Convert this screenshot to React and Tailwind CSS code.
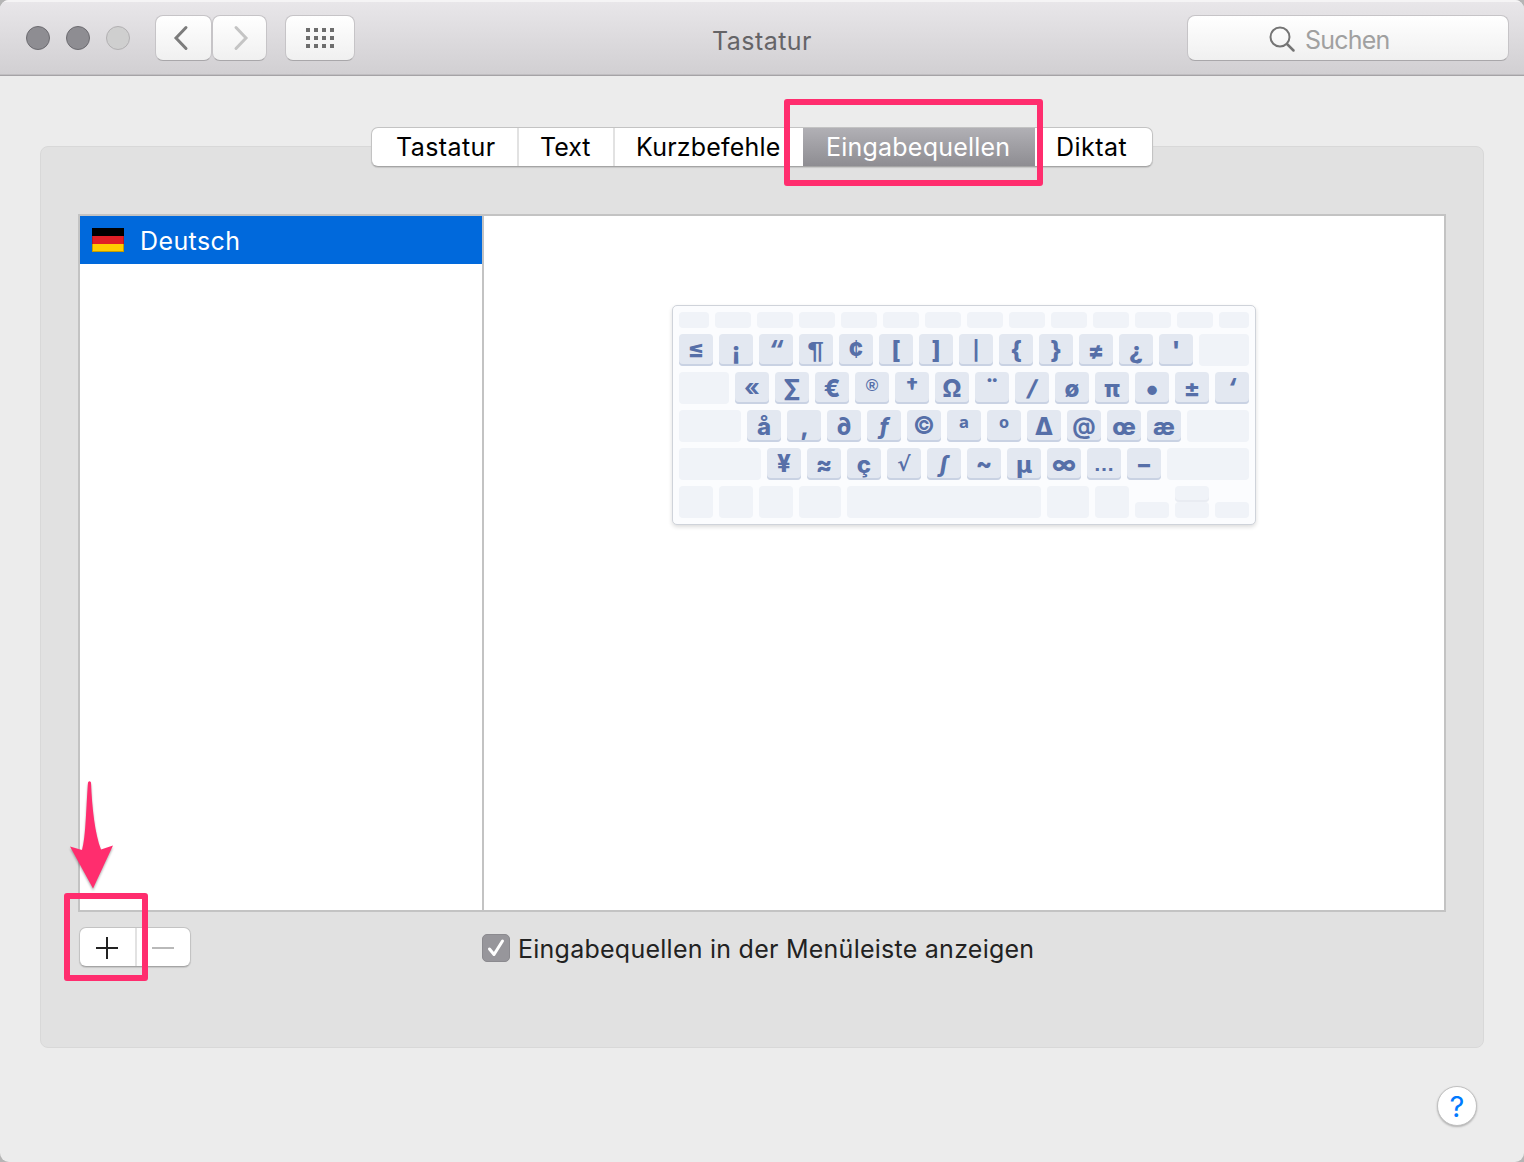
import React from "react";

const glyphRows = [
  { keys: ["≤", "¡", "“", "¶", "¢", "[", "]", "|", "{", "}", "≠", "¿", "'"], after: "w-[50px]" },
  { before: "w-[50px]", keys: ["«", "∑", "€", "®", "†", "Ω", "¨", "/", "ø", "π", "•", "±", "‘"] },
  { before: "w-[62px]", keys: ["å", "‚", "∂", "ƒ", "©", "ª", "º", "∆", "@", "œ", "æ"], after: "w-[62px]" },
  { before: "w-[82px]", keys: ["¥", "≈", "ç", "√", "∫", "~", "µ", "∞", "…", "–"], after: "w-[82px]" },
];

// Size, slant and offset of each glyph that departs from the standard key label.
const glyphClass = {
  "≤": "text-[24px] font-extrabold",
  "“": "text-[24px] font-extrabold italic",
  "¶": "text-[24px] font-bold font-['Liberation_Sans',sans-serif] scale-x-125 translate-y-px",
  "¢": "text-[24px] font-extrabold",
  "|": "text-[19px] font-bold translate-y-px",
  "®": "text-[17px] font-bold font-['Liberation_Sans',sans-serif] -translate-y-0.5",
  "†": "text-[22px] font-extrabold -translate-y-0.5",
  "/": "text-[22px] font-extrabold -skew-x-12",
  "ƒ": "text-[23px] font-extrabold italic",
  "©": "text-[24px] font-bold",
  "ª": "text-[26px] font-bold font-['Open_Sans',sans-serif] translate-y-0.5",
  "º": "text-[26px] font-bold font-['Open_Sans',sans-serif] translate-y-0.5",
  "@": "text-[23px] font-bold",
  "√": "text-[20px] font-bold font-['DejaVu_Sans',sans-serif]",
  "∫": "text-[22px] font-extrabold italic",
  "~": "text-[24px] font-extrabold",
  "•": "text-[30px] font-extrabold",
  "…": "text-[21px] font-bold font-['Liberation_Sans',sans-serif]",
  "‘": "text-[24px] font-extrabold italic",
  "«": "text-[24px] font-bold",
  "¥": "text-[24px] font-extrabold",
};

function Blank({ size }) {
  return <div className={`rounded-[4px] bg-[#f0f3f8] ${size}`} />;
}

function Key({ glyph }) {
  return (
    <div className="flex h-8 w-[34px] items-center justify-center rounded-[4px] bg-[#e3e8f1] shadow-[inset_0_-2px_0_#c9d2e3]">
      <span className={`block whitespace-pre leading-8 text-[#566fa8] ${glyphClass[glyph] || "text-[24px] font-extrabold translate-y-px"}`}>
        {glyph}
      </span>
    </div>
  );
}

function Keyboard() {
  return (
    <div className="flex h-[220px] w-[584px] flex-col gap-1.5 rounded-[5px] border border-[#cfd3da] bg-[#fbfcfe] p-1.5 shadow-[0_2px_4px_rgba(0,0,0,0.14)]">
      <div className="flex gap-1.5">
        {Array.from({ length: 14 }, (_, i) => (
          <Blank key={i} size={i === 0 || i === 13 ? "h-4 w-[30px]" : "h-4 w-9"} />
        ))}
      </div>
      {glyphRows.map((row, i) => (
        <div key={i} className="flex h-8 gap-1.5">
          {row.before && <Blank size={`h-8 ${row.before}`} />}
          {row.keys.map((g) => (
            <Key key={g} glyph={g} />
          ))}
          {row.after && <Blank size={`h-8 ${row.after}`} />}
        </div>
      ))}
      <div className="flex h-8 items-end gap-1.5">
        <Blank size="h-8 w-[34px]" />
        <Blank size="h-8 w-[34px]" />
        <Blank size="h-8 w-[34px]" />
        <Blank size="h-8 w-[42px]" />
        <Blank size="h-8 w-[194px]" />
        <Blank size="h-8 w-[42px]" />
        <Blank size="h-8 w-[34px]" />
        <Blank size="h-4 w-[34px]" />
        <div className="flex flex-col">
          <Blank size="h-4 w-[34px] shadow-[inset_0_-2px_0_#e9ecf2]" />
          <Blank size="h-4 w-[34px]" />
        </div>
        <Blank size="h-4 w-[34px]" />
      </div>
    </div>
  );
}

const toolButton =
  "flex h-[46px] items-center justify-center rounded-[8px] border border-[#c6c4c7] border-b-[#a9a7aa] bg-linear-to-b from-white to-[#f0f0f0]";

function TitleBar() {
  return (
    <header className="flex h-[76px] items-start border-b border-[#a5a3a6] bg-linear-to-b from-[#e9e7ea] to-[#d1cfd2] shadow-[inset_0_2px_0_#f5f4f5,inset_0_-1px_0_#c0bec1]">
      <div className="mt-[26px] ml-[26px] flex gap-4">
        <span className="size-6 rounded-full border border-[#6c6b70] bg-[#8e8d92]" />
        <span className="size-6 rounded-full border border-[#6c6b70] bg-[#8e8d92]" />
        <span className="size-6 rounded-full border border-[#b2b0b2] bg-[#cfcfcf]" />
      </div>
      <div className="mt-[15px] ml-[25px] flex">
        <button className={`${toolButton} w-[57px]`}>
          <svg width="16" height="26" viewBox="0 0 16 26" fill="none" stroke="#7c7c7c" strokeWidth="3" strokeLinecap="round" className="-ml-1.5">
            <path d="M13 2.500L3 13L13 23.500" />
          </svg>
        </button>
        <button className={`${toolButton} w-[55px]`}>
          <svg width="16" height="26" viewBox="0 0 16 26" fill="none" stroke="#c4c4c4" strokeWidth="3" strokeLinecap="round" className="ml-0.5">
            <path d="M3 2.500L13 13L3 23.500" />
          </svg>
        </button>
      </div>
      <button className={`${toolButton} mt-[15px] ml-[18px] w-[70px]`}>
        <span className="grid grid-cols-4 gap-1">
          {Array.from({ length: 12 }, (_, i) => (
            <span key={i} className="size-1 bg-[#6d6d6d]" />
          ))}
        </span>
      </button>
      <h1 className="mt-[23px] ml-[357px] w-[475px] text-[25px] leading-9 tracking-[0.45px] text-[#656467]">Tastatur</h1>
      <div className={`${toolButton} mt-[15px] w-[322px] justify-start! pl-[81px]`}>
        <svg width="28" height="28" viewBox="0 0 28 28" fill="none" stroke="#747474" strokeWidth="2" strokeLinecap="round" className="mt-0.5">
          <circle cx="11" cy="12" r="9.500" />
          <path d="M18 19L24.500 25.500" strokeWidth="2.500" />
        </svg>
        <span className="ml-2 pt-[3px] text-[25px] leading-8 tracking-[-0.8px] text-[#a0a0a0]">Suchen</span>
      </div>
    </header>
  );
}

function Tabs() {
  const tab = "h-full border-[#e2e2e2] text-[25px] leading-[39px] whitespace-nowrap";
  return (
    <nav className="flex h-10 w-[782px] overflow-hidden rounded-[7px] border border-[#c3c3c3] border-b-[#a5a5a5] bg-white text-black shadow-[0_1px_1px_rgba(0,0,0,0.12)]">
      <div className={`${tab} w-[147px] border-r-2 pl-6 tracking-[0.4px]`}>Tastatur</div>
      <div className={`${tab} w-24 border-r-2 pl-[21px]`}>Text</div>
      <div className={`${tab} w-[188px] pl-[21px] tracking-[0.2px]`}>Kurzbefehle</div>
      <div className={`${tab} w-[232px] bg-linear-to-b from-[#b1b0b5] to-[#8e8d92] pl-[23px] tracking-[0.22px] text-white`}>Eingabequellen</div>
      <div className={`${tab} flex-1 pl-[21px] tracking-[0.45px]`}>Diktat</div>
    </nav>
  );
}

export default function App() {
  return (
    <div className="h-[1162px] w-[1524px] bg-[#b5b5b5] font-['Inter',sans-serif]">
      <div className="relative flex h-full w-full flex-col overflow-hidden rounded-[9px] bg-[#ececec]">
        <TitleBar />
        <main className="mx-10 mt-[70px] h-[902px] rounded-[8px] border border-[#d8d8d8] bg-[#e1e1e1]">
          <div className="-mt-5 ml-[330px]">
            <Tabs />
          </div>
          <section className="mt-[47px] ml-[37px] flex h-[698px] w-[1368px] border-2 border-[#c3c3c3] bg-white">
            <div className="w-[404px] border-r-2 border-[#c3c3c3]">
              <div className="flex h-12 items-center bg-[#0069dc] pl-3">
                <div className="flex h-6 w-8 flex-col">
                  <span className="h-2 bg-black" />
                  <span className="h-2 border-x border-[#b81a20] bg-[#e01f26]" />
                  <span className="h-2 border-x border-b border-[#c69c00] bg-[#ffcc00]" />
                </div>
                <span className="ml-4 pt-0.5 text-[25px] leading-9 tracking-[0.4px] text-white">Deutsch</span>
              </div>
            </div>
            <div className="pt-[89px] pl-[188px]">
              <Keyboard />
            </div>
          </section>
          <div className="mt-[15px] ml-[38px] flex h-10 items-center">
            <div className="flex h-10 w-28 items-stretch rounded-[7px] border border-[#c3c3c3] border-b-[#a5a5a5] bg-white shadow-[0_1px_1px_rgba(0,0,0,0.12)]">
              <div className="flex w-[57px] items-center border-r-2 border-[#e2e2e2] pt-0.5 pl-4">
                <svg width="22" height="22" viewBox="0 0 22 22" stroke="#222" strokeWidth="2">
                  <path d="M0 11H22M11 0V22" />
                </svg>
              </div>
              <div className="flex items-center pt-0.5 pl-[15px]">
                <span className="h-0.5 w-[22px] bg-[#b9b9b9]" />
              </div>
            </div>
            <div className="mt-0.5 ml-[291px] flex size-7 items-center justify-center rounded-[5px] border border-[#8b8a8f] bg-[#97969b]">
              <svg width="20" height="22" viewBox="0 0 20 22" fill="none" stroke="white" strokeWidth="3" strokeLinecap="round" strokeLinejoin="round">
                <path d="M3.500 12L8 17.500L16.500 4" />
              </svg>
            </div>
            <span className="ml-2 pt-1 text-[25px] leading-9 tracking-[0.25px] whitespace-nowrap text-[#222]">Eingabequellen in der Menüleiste anzeigen</span>
          </div>
        </main>
        <button className="mt-[38px] ml-[1437px] flex size-10 items-center justify-center rounded-full border border-[#c0c0c0] bg-white text-[29px] leading-none text-[#007aff] shadow-[0_1px_2px_rgba(0,0,0,0.25)]">
          ?
        </button>
        <div className="absolute top-[99px] left-[784px] h-[87px] w-[259px] rounded-[3px] border-6 border-[#ff2d6e]" />
        <div className="absolute top-[893px] left-[64px] h-[88px] w-[84px] rounded-[3px] border-6 border-[#ff2d6e]" />
        <svg className="absolute top-[776px] left-[66px] drop-shadow-[0_2px_1px_rgba(0,0,0,0.3)]" width="52" height="118" viewBox="0 0 52 118">
          <path fill="#ff2d6e" d="M22 6.500Q23.500 4 25 6.500C26 32 29 58 35 73.500L47 69.500L27 112.500L4 70.500L16 74C20 60 20 32 22 6.500Z" />
        </svg>
      </div>
    </div>
  );
}
